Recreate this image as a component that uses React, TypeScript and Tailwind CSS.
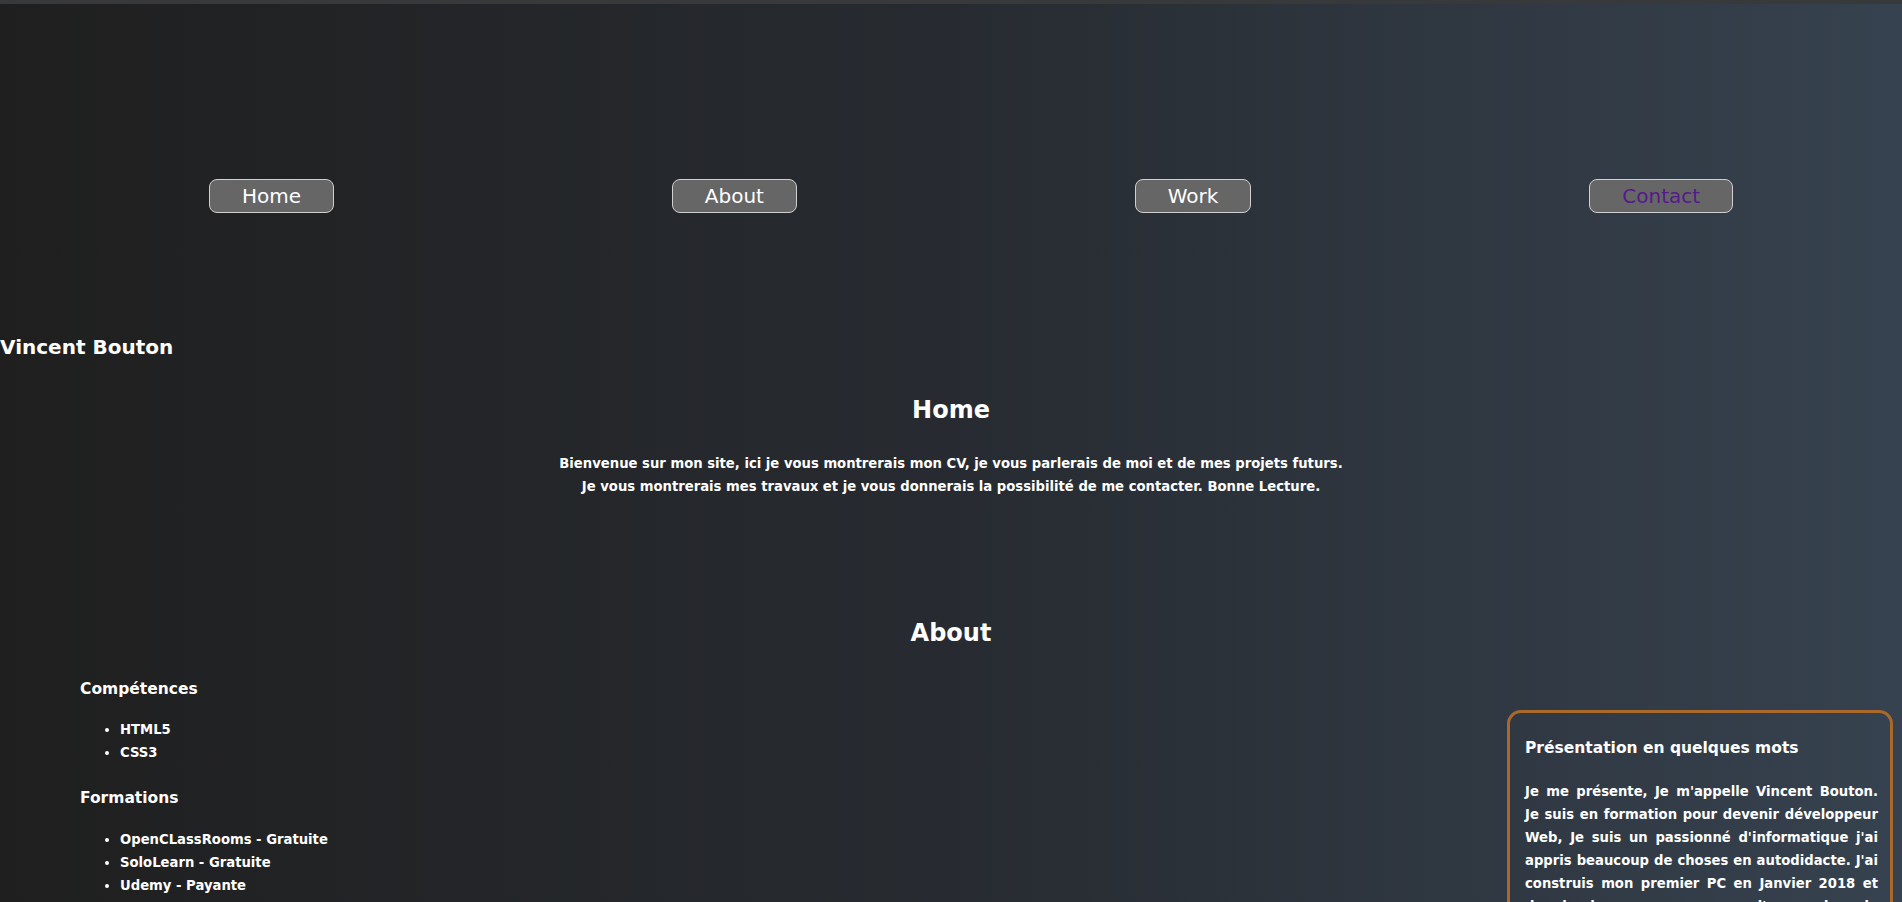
import React from "react";

const font = { fontFamily: '"DejaVu Sans", "Noto Sans", sans-serif' };

function NavButton({ label, visited }: { label: string; visited?: boolean }) {
  return (
    <li>
      <a
        href="#"
        className={`flex h-[34px] items-center rounded-lg border border-[#d0d0d0] bg-[#666666] px-[32px] text-[20px] leading-none ${
          visited ? "text-[#551a8b]" : "text-white"
        }`}
      >
        {label}
      </a>
    </li>
  );
}

export default function App() {
  return (
    <div
      className="min-h-screen overflow-hidden bg-gradient-to-r from-[#1f1f1f] via-[#272b31] to-[#36424f] text-white"
      style={font}
    >
      <div className="h-[4px] bg-[#38393b]" />
      <nav className="pt-[175px]">
        <ul className="flex justify-around pl-10">
          <NavButton label="Home" />
          <NavButton label="About" />
          <NavButton label="Work" />
          <NavButton label="Contact" visited />
        </ul>
      </nav>

      <h1 className="mt-[120px] text-[20px] font-bold leading-[28px]">Vincent Bouton</h1>

      <section className="mt-[31px] text-center">
        <h2 className="text-[24px] font-bold leading-[36px]">Home</h2>
        <p className="mt-[24px] text-[13.2px] font-bold leading-[23px]">
          Bienvenue sur mon site, ici je vous montrerais mon CV, je vous parlerais de moi et de mes projets futurs.
          <br />
          Je vous montrerais mes travaux et je vous donnerais la possibilité de me contacter. Bonne Lecture.
        </p>
      </section>

      <section className="mt-[117px]">
        <h2 className="text-center text-[24px] font-bold leading-[36px]">About</h2>
        <div className="flex items-start justify-between">
          <div className="pl-[80px] pt-[26px]">
            <h3 className="text-[15.5px] font-bold leading-[24px]">Compétences</h3>
            <ul className="mt-[17px] list-disc pl-[40px] text-[13.2px] font-bold leading-[23px]">
              <li>HTML5</li>
              <li>CSS3</li>
            </ul>
            <h3 className="mt-[22px] text-[15.5px] font-bold leading-[24px]">Formations</h3>
            <ul className="mt-[18px] list-disc pl-[40px] text-[13.2px] font-bold leading-[23px]">
              <li>OpenCLassRooms - Gratuite</li>
              <li>SoloLearn - Gratuite</li>
              <li>Udemy - Payante</li>
            </ul>
          </div>
          <aside className="mr-[9px] mt-[59px] w-[386px] rounded-[14px] border-[3px] border-[#a8692a] pl-[15px] pr-[12px] pt-[23px] pb-6">
            <h3 className="text-[15.5px] font-bold leading-[24px]">Présentation en quelques mots</h3>
            <p className="mt-[20px] text-justify text-[13.2px] font-bold leading-[23px]">
              Je me présente, Je m'appelle Vincent Bouton. Je suis en formation pour devenir développeur Web, Je suis
              un passionné d'informatique j'ai appris beaucoup de choses en autodidacte. J'ai construis mon premier PC
              en Janvier 2018 et depuis je ne cesse pas d'apprendre de nouvelles choses chaque jour.
            </p>
          </aside>
        </div>
      </section>
    </div>
  );
}
